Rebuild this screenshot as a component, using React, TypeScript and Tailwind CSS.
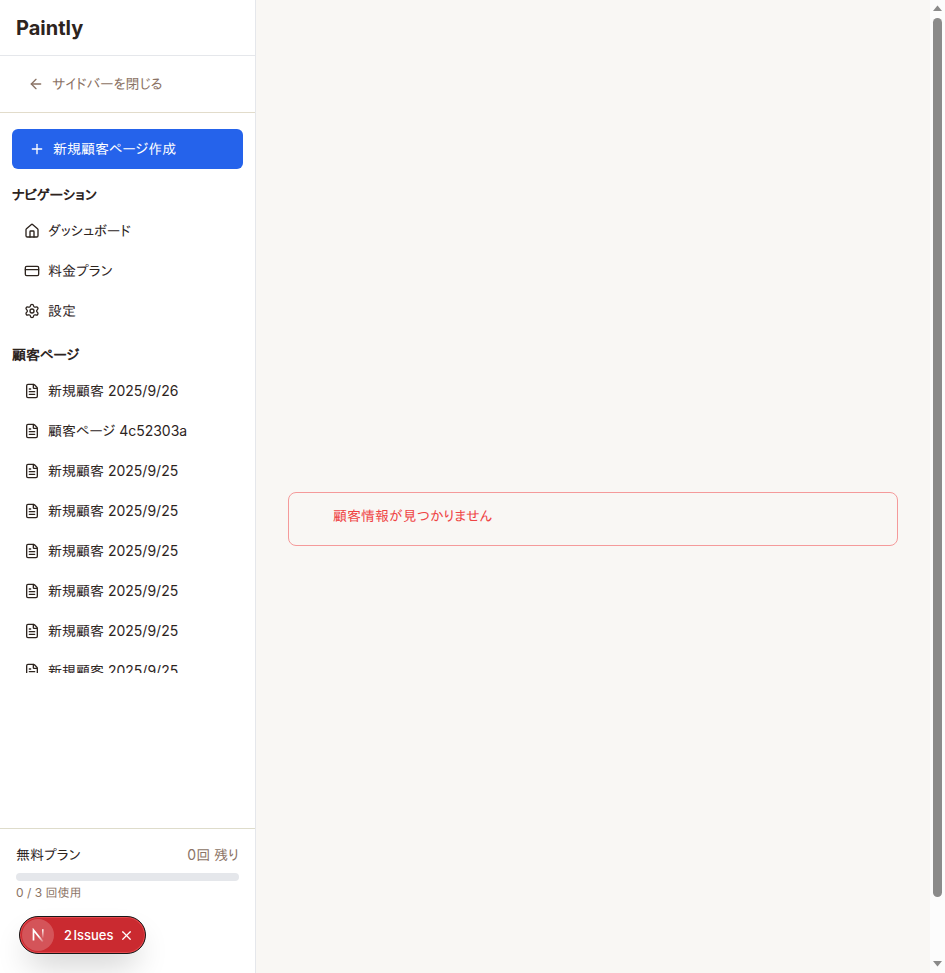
import React from "react";
import { ArrowLeft, CreditCard, FileText, House, Plus, Settings, X } from "lucide-react";

const navigation = [
  { icon: House, label: "ダッシュボード" },
  { icon: CreditCard, label: "料金プラン" },
  { icon: Settings, label: "設定" },
];

const pages = [
  "新規顧客 2025/9/26",
  "顧客ページ 4c52303a",
  "新規顧客 2025/9/25",
  "新規顧客 2025/9/25",
  "新規顧客 2025/9/25",
  "新規顧客 2025/9/25",
  "新規顧客 2025/9/25",
  "新規顧客 2025/9/25",
];

function Item({ icon: Icon, label }: { icon: React.ElementType; label: string }) {
  return (
    <a className="flex h-10 shrink-0 items-center gap-2 px-3">
      <Icon className="size-4 shrink-0" strokeWidth={2} />
      <span>{label}</span>
    </a>
  );
}

function IssuesBadge() {
  return (
    <div className="absolute left-[19px] top-[916px] flex h-[38px] w-[127px] items-center rounded-full border border-[#171717] bg-[#ca2a30] p-0.5 text-white shadow-[inset_0_0_0_1px_#e5484d,0_16px_32px_-8px_rgba(0,0,0,0.24)]">
      <span className="flex size-8 items-center justify-center rounded-full bg-white/20">
        <svg width="14" height="14" viewBox="0 0 14 14" fill="none">
          <defs>
            <linearGradient id="diag" x1="8" y1="8" x2="13" y2="14.5" gradientUnits="userSpaceOnUse">
              <stop stopColor="white" />
              <stop offset="1" stopColor="white" stopOpacity="0" />
            </linearGradient>
            <linearGradient id="stem" x1="11.5" y1="1" x2="11.5" y2="10.5" gradientUnits="userSpaceOnUse">
              <stop stopColor="white" />
              <stop offset="1" stopColor="white" stopOpacity="0" />
            </linearGradient>
          </defs>
          <path d="M2.500 12.5V2l9.300 11.600" stroke="url(#diag)" strokeWidth="1.7" />
          <path d="M11.800 1.200v9" stroke="url(#stem)" strokeWidth="1.6" />
        </svg>
      </span>
      <span className="ml-[10px] whitespace-nowrap text-[13px] font-medium leading-5 [word-spacing:-2px]">2 Issues</span>
      <X className="ml-[6px] size-[15px] shrink-0" strokeWidth={2} />
    </div>
  );
}

export default function App() {
  return (
    <div className="relative flex h-[973px] w-[945px] overflow-hidden bg-[#f9f7f4] font-['Inter','IPAPGothic','Noto_Sans_CJK_JP',sans-serif] text-sm text-[#2d241e]">
      <aside className="flex w-64 shrink-0 flex-col border-r border-[#e5e7eb] bg-white">
        <header className="flex h-14 shrink-0 items-center border-b border-[#e5e7eb] px-4">
          <h1 className="text-xl font-bold leading-7">Paintly</h1>
        </header>
        <div className="flex h-[57px] shrink-0 items-center border-b border-[#e2dccb] px-7 text-[#8b7365]">
          <ArrowLeft className="mr-2 size-4" />
          <span>サイドバーを閉じる</span>
        </div>
        <div className="flex flex-1 flex-col px-3 pt-4">
          <button className="flex h-10 shrink-0 items-center gap-2 rounded-md bg-[#2563eb] px-[17px] text-white">
            <Plus className="size-4" />
            <span>新規顧客ページ作成</span>
          </button>
          <h2 className="mt-4 h-5 leading-5 font-bold">ナビゲーション</h2>
          <nav className="mt-1.5 flex flex-col">
            {navigation.map((n) => <Item key={n.label} {...n} />)}
          </nav>
          <h2 className="mt-3.5 h-5 leading-5 font-bold">顧客ページ</h2>
          <nav className="mt-1.5 flex h-[302px] flex-col overflow-hidden">
            {pages.map((label, i) => <Item key={i} icon={FileText} label={label} />)}
          </nav>
        </div>
        <footer className="h-[145px] shrink-0 border-t border-[#dedccb] px-4 pt-4">
          <div className="flex h-5 items-center justify-between">
            <span>無料プラン</span>
            <span className="text-[#8b7365]">0回 残り</span>
          </div>
          <div className="mt-2 h-2 rounded-full bg-[#e5e7eb]" />
          <p className="mt-1 text-xs leading-4 text-[#8b7365]">0 / 3 回使用</p>
        </footer>
      </aside>
      <main className="flex flex-1 flex-col px-8 pt-[492px]">
        <div className="h-[54px] rounded-lg border border-[#f59a9a] pl-11 pt-3 text-[#ef4444]">
          <p className="leading-[22px]">顧客情報が見つかりません</p>
        </div>
      </main>
      <div className="flex w-[15px] shrink-0 flex-col items-center bg-[#fcfcfc]">
        <svg width="15" height="18" viewBox="0 0 15 18"><path d="M3 11h9L7.500 5.500z" fill="#8b8b8b" /></svg>
        <div className="h-[879px] w-[9px] rounded-full bg-[#8b8b8b]" />
        <svg className="mt-auto" width="15" height="14" viewBox="0 0 15 14"><path d="M3 2h9L7.500 7.500z" fill="#8b8b8b" /></svg>
      </div>
      <IssuesBadge />
    </div>
  );
}
